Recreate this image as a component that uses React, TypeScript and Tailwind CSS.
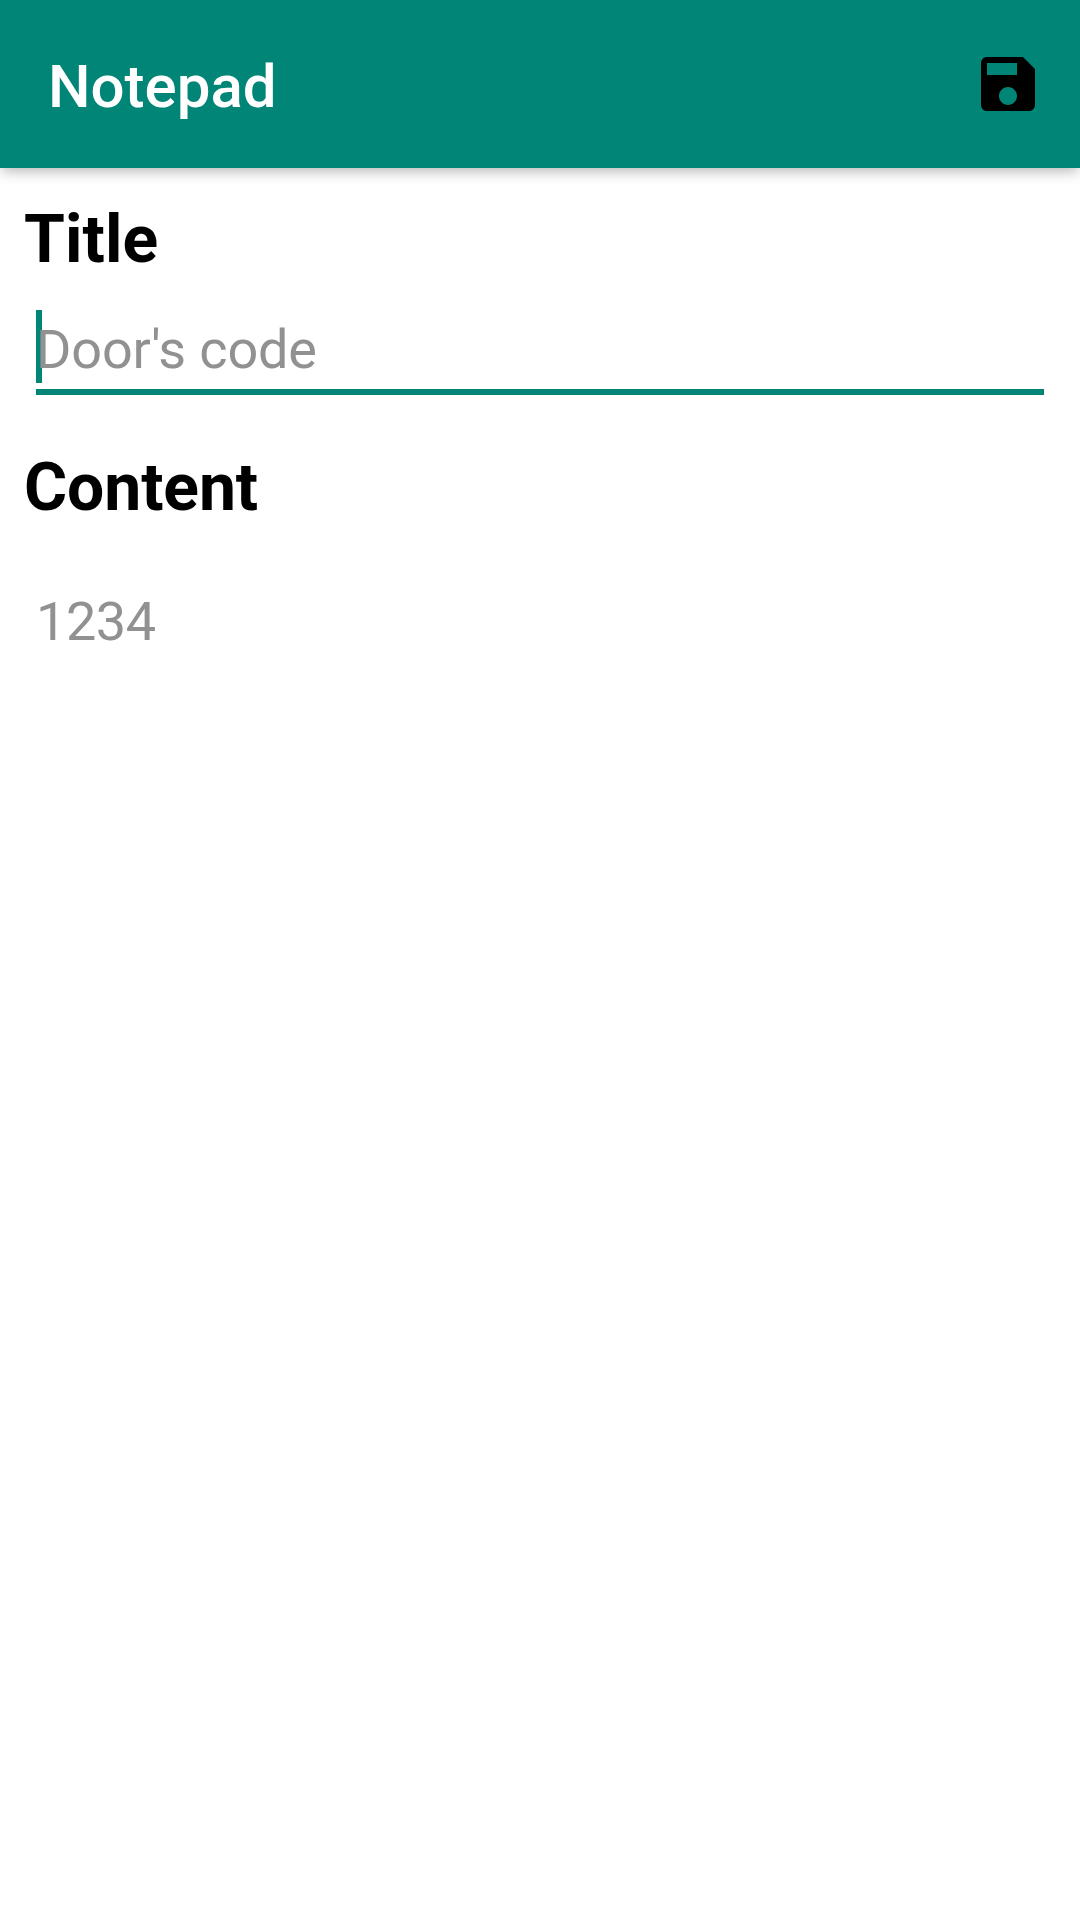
export default function App() {
  return (
    <div className="flex h-[1920px] w-[1080px] flex-col overflow-hidden bg-white font-['Roboto',sans-serif]">
      <header className="flex h-[168px] shrink-0 items-center justify-between bg-[#018577] pr-9 pl-12 shadow-[0_5px_13px_-2px_rgba(0,0,0,0.3)]">
        <h1 className="pt-1.5 text-[60px] leading-[70px] font-medium text-white">Notepad</h1>
        <button aria-label="Save" className="block">
          <svg width="72" height="72" viewBox="0 0 24 24">
            <path d="M17 3H5c-1.11 0-2 .9-2 2v14c0 1.1.89 2 2 2h14c1.1 0 2-.9 2-2V7l-4-4zm-5 16c-1.66 0-3-1.34-3-3s1.34-3 3-3 3 1.34 3 3-1.34 3-3 3zm3-10H5V5h10v4z" />
          </svg>
        </button>
      </header>
      <main className="flex flex-col px-6 pt-[33px]">
        <h2 className="text-[66px] leading-[77px] font-bold tracking-[0.1px] text-black">Title</h2>
        <div className="mx-3 mt-[32px] flex h-[85px] items-start border-b-[6px] border-[#018577]">
          <div className="relative h-[73px] pt-[8px]">
            <span className="absolute top-0 left-0 h-[73px] w-[6px] bg-[#018577]" />
            <span className="relative block text-[54px] leading-[64px] tracking-[-0.15px] text-[#919191]">Door's code</span>
          </div>
        </div>
        <h2 className="mt-[54px] text-[66px] leading-[77px] font-bold tracking-[-0.1px] text-black">Content</h2>
        <p className="mx-3 mt-[64px] text-[54px] leading-[64px] tracking-[-0.45px] text-[#919191]">1234</p>
      </main>
    </div>
  );
}
